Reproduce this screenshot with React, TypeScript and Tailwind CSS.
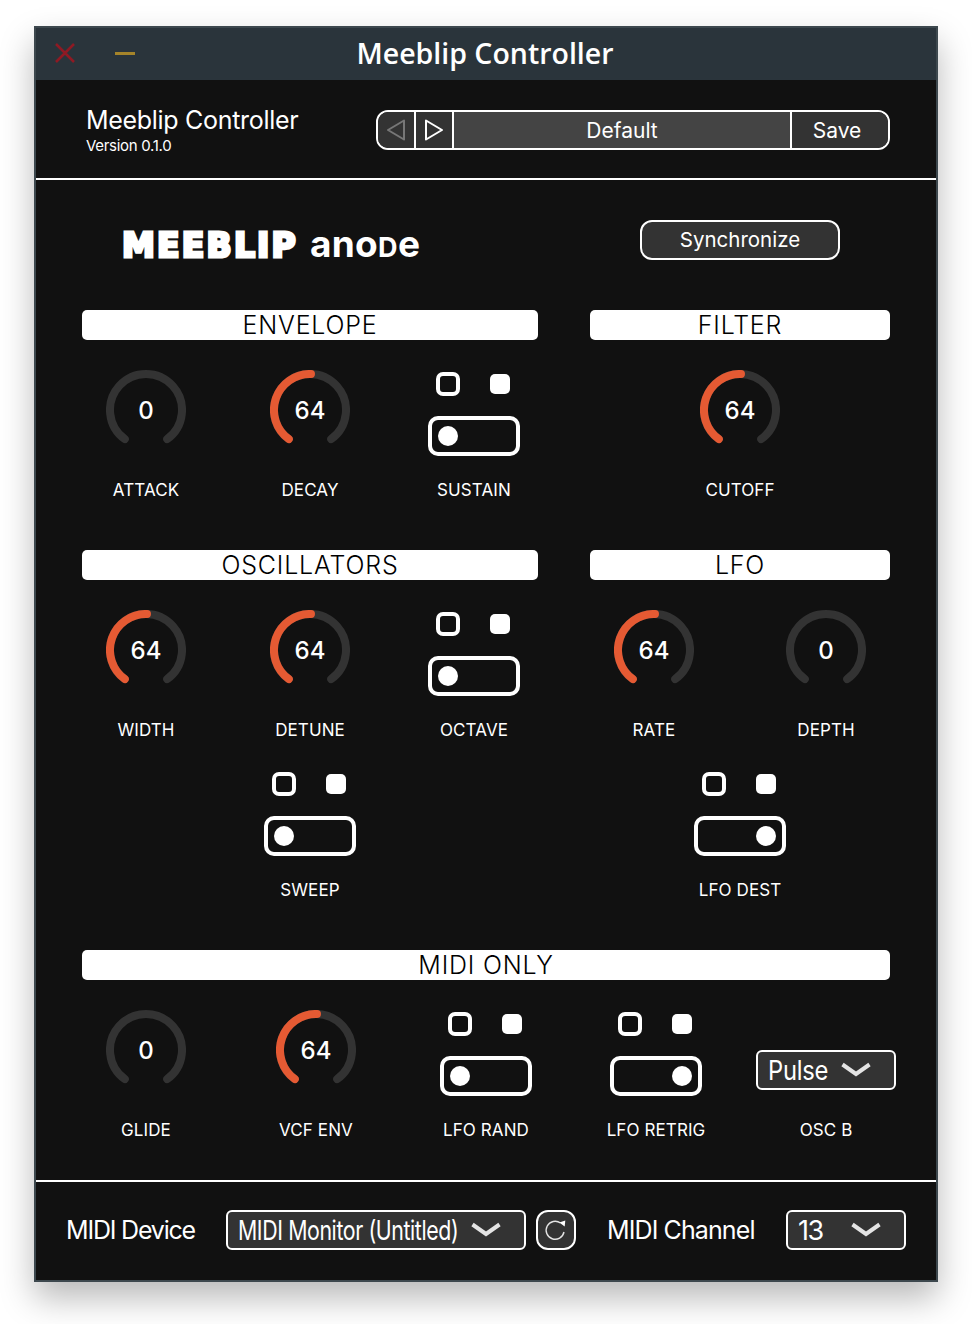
import React from 'react';

const font = { sans: "font-['Inter','Liberation_Sans',sans-serif]" };

const Knob: React.FC<{ value: number; label: string }> = ({ value, label }) => {
  const track = 'M 18.8 69.1 A 36 36 0 1 1 61.2 69.1';
  const fill = 'M 18.8 69.1 A 36 36 0 0 1 41 4';
  return (
    <Cell label={label}>
      <div className="relative w-20 h-20">
        <svg width="80" height="80" viewBox="0 0 80 80" fill="none" strokeWidth="8" strokeLinecap="round">
          <path d={track} stroke="#333333" />
          {value > 0 && <path d={fill} stroke="#e55a33" />}
        </svg>
        <div className="absolute inset-0 pt-0.5 flex items-center justify-center text-[24px] font-medium text-white">{value}</div>
      </div>
    </Cell>
  );
};

const Cell: React.FC<{ label: string; children: React.ReactNode }> = ({ label, children }) => (
  <div className="w-32 h-[130px] flex flex-col items-center">
    <div className="h-20 w-full flex justify-center items-start">{children}</div>
    <div className="mt-[30px] h-5 leading-5 text-[17px] text-white tracking-[0.1px] whitespace-nowrap">{label}</div>
  </div>
);

const Toggle: React.FC<{ label: string; on?: boolean }> = ({ label, on }) => (
  <Cell label={label}>
    <div className="w-[92px]">
      <div className="h-7 pl-2 flex items-center gap-[30px]">
        <div className="w-6 h-6 border-4 border-white rounded-[7px]" />
        <div className="w-5 h-5 bg-white rounded-[5px]" />
      </div>
      <div className={`mt-[18px] h-10 border-4 border-white rounded-[10px] px-1.5 flex items-center ${on ? 'justify-end' : 'justify-start'}`}>
        <div className="w-5 h-5 rounded-full bg-white" />
      </div>
    </div>
  </Cell>
);

const Chevron = () => (
  <svg width="30" height="16" viewBox="0 0 30 16" fill="none" className="shrink-0">
    <path d="M1.5 2.5 L15 12 L28.5 2.5" stroke="#e4e4e4" strokeWidth="4" />
  </svg>
);

const Select: React.FC<{ text: string; className: string; boxClass: string; textClass: string }> = ({ text, className, boxClass, textClass }) => (
  <div className={`h-10 border-2 border-white rounded-md bg-[#333333] flex items-center pl-2.5 ${className}`}>
    <div className={`shrink-0 pt-[3px] ${boxClass}`}>
      <div className={`origin-left text-[27px] text-white whitespace-nowrap ${textClass}`}>{text}</div>
    </div>
    <Chevron />
  </div>
);

const Heading: React.FC<{ title: string }> = ({ title }) => (
  <div className="h-[30px] bg-white rounded-[5px] text-center text-black text-[25px] leading-[31px] tracking-[0.8px] font-light">{title}</div>
);

const Row: React.FC<{ children: React.ReactNode; className?: string }> = ({ children, className }) => (
  <div className={`flex ${className ?? 'justify-between'}`}>{children}</div>
);

export default function App() {
  return (
    <div className={`h-[1324px] bg-white pt-[26px] pl-[34px] ${font.sans}`}>
      <div className="w-[904px] h-[1256px] border-2 border-[#3d484e] bg-[#111111] shadow-[0_16px_32px_rgba(0,0,0,0.28)] flex flex-col">
        {/* title bar */}
        <div className="relative h-[52px] bg-[#2a343b] flex items-center justify-center pb-0.5 shrink-0">
          <div className="absolute left-[19px] top-[15px] flex items-center gap-10">
            <svg width="20" height="20" viewBox="0 0 20 20" fill="none">
              <path d="M1 1 L19 19 M19 1 L1 19" stroke="#8f1a24" strokeWidth="2.5" />
            </svg>
            <div className="w-5 h-[3px] bg-[#a5842a]" />
          </div>
          <span className="font-['Open_Sans',sans-serif] font-semibold text-[28.5px] text-white -ml-0.5">Meeblip Controller</span>
        </div>

        {/* header */}
        <div className="h-[98px] pl-[50px] pt-0.5 flex items-center shrink-0">
          <div className="w-[290px] text-white">
            <div className="text-[25px] leading-[30px] tracking-[-0.3px] -mt-px">Meeblip Controller</div>
            <div className="text-[15px] leading-[18px] mt-0.5 tracking-[-0.3px]">Version 0.1.0</div>
          </div>
          <div className="w-[514px] h-10 border-2 border-white rounded-xl overflow-hidden flex text-white text-[21px]">
            <div className="w-[38px] bg-[#333333] flex items-center justify-center border-r-2 border-white">
              <svg width="20" height="22" viewBox="0 0 20 22" fill="none">
                <path d="M18 1.5 L2 11 L18 20.5 Z" stroke="#777777" strokeWidth="2" strokeLinejoin="round" />
              </svg>
            </div>
            <div className="w-[38px] bg-[#333333] flex items-center justify-center border-r-2 border-white">
              <svg width="20" height="22" viewBox="0 0 20 22" fill="none">
                <path d="M2 1.5 L18 11 L2 20.5 Z" stroke="#ffffff" strokeWidth="2" strokeLinejoin="round" />
              </svg>
            </div>
            <div className="w-[338px] bg-[#444444] flex items-center justify-center pt-0.5 border-r-2 border-white">Default</div>
            <div className="flex-1 bg-[#333333] flex items-center justify-center pt-0.5 pr-1.5">Save</div>
          </div>
        </div>
        <div className="h-0.5 bg-white shrink-0" />

        {/* controls */}
        <div className="px-[46px] flex-1 text-white">
          <div className="h-[130px] grid grid-cols-[456px_300px] gap-x-[52px]">
            <div className="pl-10 pt-[46px] h-[90px] flex items-baseline text-white whitespace-nowrap leading-[36px]">
              <span className="font-['DejaVu_Sans',sans-serif] font-bold text-[33px] tracking-[2.2px] [-webkit-text-stroke:3px_white]">MEEBLIP</span>
              <span className="ml-[12px] font-bold text-[37px] tracking-[0.3px]">
                ano<span className="text-[27px]">D</span>e
              </span>
            </div>
            <div className="pt-10 flex justify-center">
              <div className="w-[200px] h-10 border-2 border-white rounded-xl bg-[#333333] flex items-center justify-center text-[20.5px]">Synchronize</div>
            </div>
          </div>

          <div className="grid grid-cols-[456px_300px] gap-x-[52px]">
            <section>
              <Heading title="ENVELOPE" />
              <Row className="mt-[30px] justify-between">
                <Knob value={0} label="ATTACK" />
                <Knob value={64} label="DECAY" />
                <Toggle label="SUSTAIN" />
              </Row>
            </section>
            <section>
              <Heading title="FILTER" />
              <Row className="mt-[30px] justify-center">
                <Knob value={64} label="CUTOFF" />
              </Row>
            </section>

            <section className="mt-[50px]">
              <Heading title="OSCILLATORS" />
              <Row className="mt-[30px] justify-between">
                <Knob value={64} label="WIDTH" />
                <Knob value={64} label="DETUNE" />
                <Toggle label="OCTAVE" />
              </Row>
              <Row className="mt-[30px] justify-center">
                <Toggle label="SWEEP" />
              </Row>
            </section>
            <section className="mt-[50px]">
              <Heading title="LFO" />
              <Row className="mt-[30px] justify-between">
                <Knob value={64} label="RATE" />
                <Knob value={0} label="DEPTH" />
              </Row>
              <Row className="mt-[30px] justify-center">
                <Toggle label="LFO DEST" on />
              </Row>
            </section>
          </div>

          <section className="mt-[50px]">
            <Heading title="MIDI ONLY" />
            <Row className="mt-[30px] justify-between">
              <Knob value={0} label="GLIDE" />
              <Knob value={64} label="VCF ENV" />
              <Toggle label="LFO RAND" />
              <Toggle label="LFO RETRIG" on />
              <Cell label="OSC B">
                <Select text="Pulse" className="w-[140px] mt-10 shrink-0" boxClass="w-[73px]" textClass="tracking-[-0.3px] scale-x-[0.88]" />
              </Cell>
            </Row>
          </section>
        </div>

        {/* footer */}
        <div className="h-0.5 bg-white shrink-0" />
        <div className="h-[98px] pb-0.5 pl-[30px] flex items-center text-white shrink-0">
          <div className="w-[160px] pt-0.5 text-[25px] tracking-[-1.2px] whitespace-nowrap">MIDI Device</div>
          <Select text="MIDI Monitor (Untitled)" className="w-[300px]" boxClass="w-[233px]" textClass="tracking-[-0.5px] scale-x-[0.79]" />
          <div className="ml-2.5 w-10 h-10 border-2 border-white rounded-xl bg-[#333333] flex items-center justify-center">
            <svg width="24" height="24" viewBox="0 0 24 24" fill="none">
              <path d="M16.5 5 A 9 9 0 1 0 20 14" stroke="#e4e4e4" strokeWidth="1.4" />
              <path d="M15.3 4.5 L21.3 2.5 L20.7 8.5 Z" fill="#ffffff" />
            </svg>
          </div>
          <div className="ml-[31px] w-[179px] pt-0.5 text-[25px] tracking-[-0.9px] whitespace-nowrap">MIDI Channel</div>
          <Select text="13" className="w-[120px]" boxClass="w-[53px]" textClass="tracking-[-1.6px]" />
        </div>
      </div>
    </div>
  );
}
